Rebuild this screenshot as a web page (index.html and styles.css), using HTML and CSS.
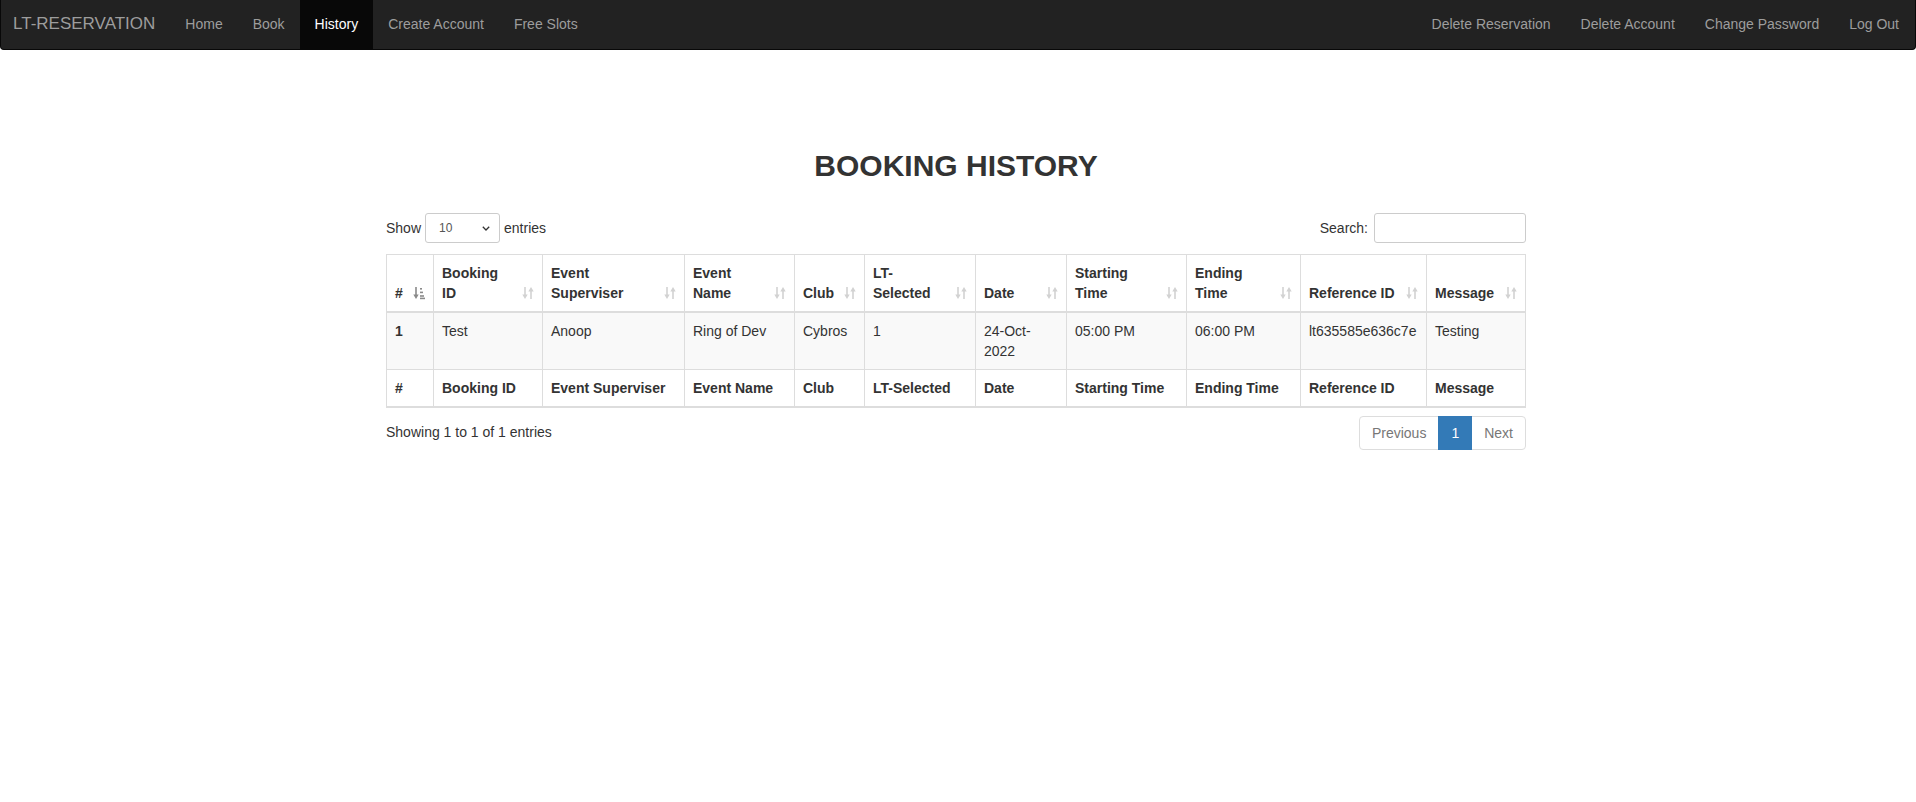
FILE: index.html
```html
<!DOCTYPE html>
<html lang="en">
<head>
<meta charset="utf-8">
<title>Booking History</title>
<link rel="stylesheet" href="styles.css">
</head>
<body>
<nav class="navbar">
  <div class="navbar-left">
    <a class="brand" href="#">LT-RESERVATION</a>
    <ul class="nav">
      <li><a href="#">Home</a></li>
      <li><a href="#">Book</a></li>
      <li class="active"><a href="#">History</a></li>
      <li><a href="#">Create Account</a></li>
      <li><a href="#">Free Slots</a></li>
    </ul>
  </div>
  <ul class="nav nav-right">
    <li><a href="#">Delete Reservation</a></li>
    <li><a href="#">Delete Account</a></li>
    <li><a href="#">Change Password</a></li>
    <li><a href="#">Log Out</a></li>
  </ul>
</nav>

<div class="page">
  <main class="container">
    <h2 class="title">BOOKING HISTORY</h2>

    <div class="dt-controls">
      <label class="dt-length">Show
        <span class="select-wrap">
          <select class="select-sm">
            <option>10</option>
            <option>25</option>
            <option>50</option>
            <option>100</option>
          </select>
          <svg class="chevron" width="8" height="5" viewBox="0 0 8 5"><polyline points="0.8,0.8 4,4 7.2,0.8" fill="none" stroke="#333" stroke-width="1.3"/></svg>
        </span>
        entries</label>
      <label class="dt-filter">Search:<input type="search" class="input-sm"></label>
    </div>

    <table class="data-table">
      <thead>
        <tr>
          <th class="c-num one-line">#<svg class="sort-icon sort-asc" width="12" height="14" viewBox="0 0 12 14"><path d="M3 1v10" stroke="currentColor" stroke-width="1.6"/><path d="M0.3 8.5h5.4L3 13z" fill="currentColor"/><rect x="7" y="2" width="2" height="1.6" fill="currentColor"/><rect x="7" y="5.6" width="3" height="1.6" fill="currentColor"/><rect x="7" y="9.2" width="4" height="1.6" fill="currentColor"/><rect x="7" y="11.6" width="5" height="1.6" fill="currentColor"/></svg></th>
          <th class="c-bid">Booking ID<svg class="sort-icon" width="12" height="14" viewBox="0 0 12 14"><path d="M3 1v9" stroke="currentColor" stroke-width="1.6"/><path d="M0.3 8.5h5.4L3 13z" fill="currentColor"/><path d="M9 4v9" stroke="currentColor" stroke-width="1.6"/><path d="M6.3 5.5h5.4L9 1z" fill="currentColor"/></svg></th>
          <th class="c-sup">Event Superviser<svg class="sort-icon" width="12" height="14" viewBox="0 0 12 14"><path d="M3 1v9" stroke="currentColor" stroke-width="1.6"/><path d="M0.3 8.5h5.4L3 13z" fill="currentColor"/><path d="M9 4v9" stroke="currentColor" stroke-width="1.6"/><path d="M6.3 5.5h5.4L9 1z" fill="currentColor"/></svg></th>
          <th class="c-ename">Event Name<svg class="sort-icon" width="12" height="14" viewBox="0 0 12 14"><path d="M3 1v9" stroke="currentColor" stroke-width="1.6"/><path d="M0.3 8.5h5.4L3 13z" fill="currentColor"/><path d="M9 4v9" stroke="currentColor" stroke-width="1.6"/><path d="M6.3 5.5h5.4L9 1z" fill="currentColor"/></svg></th>
          <th class="c-club one-line">Club<svg class="sort-icon" width="12" height="14" viewBox="0 0 12 14"><path d="M3 1v9" stroke="currentColor" stroke-width="1.6"/><path d="M0.3 8.5h5.4L3 13z" fill="currentColor"/><path d="M9 4v9" stroke="currentColor" stroke-width="1.6"/><path d="M6.3 5.5h5.4L9 1z" fill="currentColor"/></svg></th>
          <th class="c-lt">LT-Selected<svg class="sort-icon" width="12" height="14" viewBox="0 0 12 14"><path d="M3 1v9" stroke="currentColor" stroke-width="1.6"/><path d="M0.3 8.5h5.4L3 13z" fill="currentColor"/><path d="M9 4v9" stroke="currentColor" stroke-width="1.6"/><path d="M6.3 5.5h5.4L9 1z" fill="currentColor"/></svg></th>
          <th class="c-date one-line">Date<svg class="sort-icon" width="12" height="14" viewBox="0 0 12 14"><path d="M3 1v9" stroke="currentColor" stroke-width="1.6"/><path d="M0.3 8.5h5.4L3 13z" fill="currentColor"/><path d="M9 4v9" stroke="currentColor" stroke-width="1.6"/><path d="M6.3 5.5h5.4L9 1z" fill="currentColor"/></svg></th>
          <th class="c-start">Starting Time<svg class="sort-icon" width="12" height="14" viewBox="0 0 12 14"><path d="M3 1v9" stroke="currentColor" stroke-width="1.6"/><path d="M0.3 8.5h5.4L3 13z" fill="currentColor"/><path d="M9 4v9" stroke="currentColor" stroke-width="1.6"/><path d="M6.3 5.5h5.4L9 1z" fill="currentColor"/></svg></th>
          <th class="c-end">Ending Time<svg class="sort-icon" width="12" height="14" viewBox="0 0 12 14"><path d="M3 1v9" stroke="currentColor" stroke-width="1.6"/><path d="M0.3 8.5h5.4L3 13z" fill="currentColor"/><path d="M9 4v9" stroke="currentColor" stroke-width="1.6"/><path d="M6.3 5.5h5.4L9 1z" fill="currentColor"/></svg></th>
          <th class="c-ref one-line">Reference ID<svg class="sort-icon" width="12" height="14" viewBox="0 0 12 14"><path d="M3 1v9" stroke="currentColor" stroke-width="1.6"/><path d="M0.3 8.5h5.4L3 13z" fill="currentColor"/><path d="M9 4v9" stroke="currentColor" stroke-width="1.6"/><path d="M6.3 5.5h5.4L9 1z" fill="currentColor"/></svg></th>
          <th class="c-msg one-line">Message<svg class="sort-icon" width="12" height="14" viewBox="0 0 12 14"><path d="M3 1v9" stroke="currentColor" stroke-width="1.6"/><path d="M0.3 8.5h5.4L3 13z" fill="currentColor"/><path d="M9 4v9" stroke="currentColor" stroke-width="1.6"/><path d="M6.3 5.5h5.4L9 1z" fill="currentColor"/></svg></th>
        </tr>
      </thead>
      <tbody>
        <tr>
          <td class="row-num">1</td>
          <td>Test</td>
          <td>Anoop</td>
          <td>Ring of Dev</td>
          <td>Cybros</td>
          <td>1</td>
          <td>24-Oct-2022</td>
          <td>05:00 PM</td>
          <td>06:00 PM</td>
          <td>lt635585e636c7e</td>
          <td>Testing</td>
        </tr>
      </tbody>
      <tfoot>
        <tr>
          <th>#</th>
          <th>Booking ID</th>
          <th>Event Superviser</th>
          <th>Event Name</th>
          <th>Club</th>
          <th>LT-Selected</th>
          <th>Date</th>
          <th>Starting Time</th>
          <th>Ending Time</th>
          <th>Reference ID</th>
          <th>Message</th>
        </tr>
      </tfoot>
    </table>

    <div class="dt-bottom">
      <div class="dt-info">Showing 1 to 1 of 1 entries</div>
      <ul class="pagination">
        <li class="disabled"><a href="#">Previous</a></li>
        <li class="active"><a href="#">1</a></li>
        <li class="disabled"><a href="#">Next</a></li>
      </ul>
    </div>
  </main>
</div>
</body>
</html>
```

FILE: styles.css
```css
* { box-sizing: border-box; }

html, body {
  margin: 0;
  padding: 0;
  background: #fff;
}

body {
  font-family: "Liberation Sans", Helvetica, Arial, sans-serif;
  font-size: 14px;
  line-height: 20px;
  color: #333;
}

a { text-decoration: none; }

/* ---------- navbar ---------- */
.navbar {
  display: flex;
  justify-content: space-between;
  align-items: stretch;
  height: 50px;
  background: #222;
  border: 1px solid #080808;
  border-top: 0;
  border-radius: 0 0 4px 4px;
}

.navbar-left {
  display: flex;
}

.brand {
  display: block;
  padding: 14px 15px 15px 12px;
  font-size: 17px;
  line-height: 20px;
  color: #9d9d9d;
}

.nav {
  display: flex;
  list-style: none;
  margin: 0;
  padding: 0;
}

.nav-right {
  margin-right: 1px;
}

.nav a {
  display: block;
  padding: 14px 15px 15px;
  line-height: 20px;
  color: #9d9d9d;
}

.nav .active a {
  background: #080808;
  color: #fff;
}

/* ---------- page ---------- */
.page {
  padding: 99px 4px 40px 0;
}

.container {
  width: 1140px;
  margin: 0 auto;
}

.title {
  margin: 0 0 31px;
  font-size: 30px;
  line-height: 33px;
  font-weight: 700;
  text-align: center;
  color: #333;
}

.dt-controls {
  display: flex;
  justify-content: space-between;
  align-items: center;
  height: 30px;
  margin-bottom: 11px;
}

.dt-length, .dt-filter {
  display: flex;
  align-items: center;
  font-weight: 400;
  white-space: nowrap;
}

.select-wrap {
  position: relative;
  display: inline-block;
  margin: 0 4px;
}

.select-sm {
  -webkit-appearance: none;
  appearance: none;
  width: 75px;
  height: 30px;
  padding: 5px 10px 5px 13px;
  font-family: inherit;
  font-size: 12px;
  line-height: 18px;
  color: #555;
  background: #fff;
  border: 1px solid #ccc;
  border-radius: 3px;
}

.chevron {
  position: absolute;
  right: 10px;
  top: 13px;
  pointer-events: none;
}

.input-sm {
  width: 152px;
  height: 30px;
  margin-left: 6px;
  padding: 5px 10px;
  font-family: inherit;
  font-size: 12px;
  border: 1px solid #ccc;
  border-radius: 3px;
  background: #fff;
}

/* ---------- table ---------- */
.data-table {
  width: 1140px;
  table-layout: fixed;
  border-collapse: separate;
  border-spacing: 0;
  border-top: 1px solid #ddd;
  border-left: 1px solid #ddd;
  border-bottom: 1px solid #ddd;
  margin: 0;
}

.data-table th,
.data-table td {
  padding: 8px;
  text-align: left;
  vertical-align: bottom;
  border-right: 1px solid #ddd;
  border-bottom: 1px solid #ddd;
  line-height: 20px;
}

.data-table th { font-weight: 700; }

.data-table thead th {
  position: relative;
  padding-right: 30px;
  border-bottom-width: 2px;
}

.data-table td { vertical-align: top; }

.data-table tbody tr { background: #f9f9f9; }

.data-table tfoot th { vertical-align: top; }

.one-line { white-space: nowrap; }

.c-num   { width: 47px; }
.c-bid   { width: 109px; }
.c-sup   { width: 142px; }
.c-ename { width: 110px; }
.c-club  { width: 70px; }
.c-lt    { width: 111px; }
.c-date  { width: 91px; }
.c-start { width: 120px; }
.c-end   { width: 114px; }
.c-ref   { width: 126px; }
.c-msg   { width: 99px; }

.row-num { font-weight: 700; }

.sort-icon {
  position: absolute;
  right: 8px;
  bottom: 11px;
  color: #d2d2d2;
}

.sort-icon.sort-asc { color: #8a8a8a; }

/* ---------- bottom ---------- */
.dt-bottom {
  display: flex;
  justify-content: space-between;
  align-items: flex-start;
  margin-top: 6px;
}

.dt-info {
  padding-top: 8px;
}

.pagination {
  display: flex;
  list-style: none;
  margin: 2px 0;
  padding: 0;
}

.pagination a {
  display: block;
  padding: 6px 12px;
  line-height: 20px;
  border: 1px solid #ddd;
  margin-left: -1px;
  color: #777;
  background: #fff;
}

.pagination li:first-child a {
  margin-left: 0;
  border-radius: 4px 0 0 4px;
}

.pagination li:last-child a {
  border-radius: 0 4px 4px 0;
}

.pagination .active a {
  background: #337ab7;
  border-color: #337ab7;
  color: #fff;
  position: relative;
  z-index: 2;
}
```
